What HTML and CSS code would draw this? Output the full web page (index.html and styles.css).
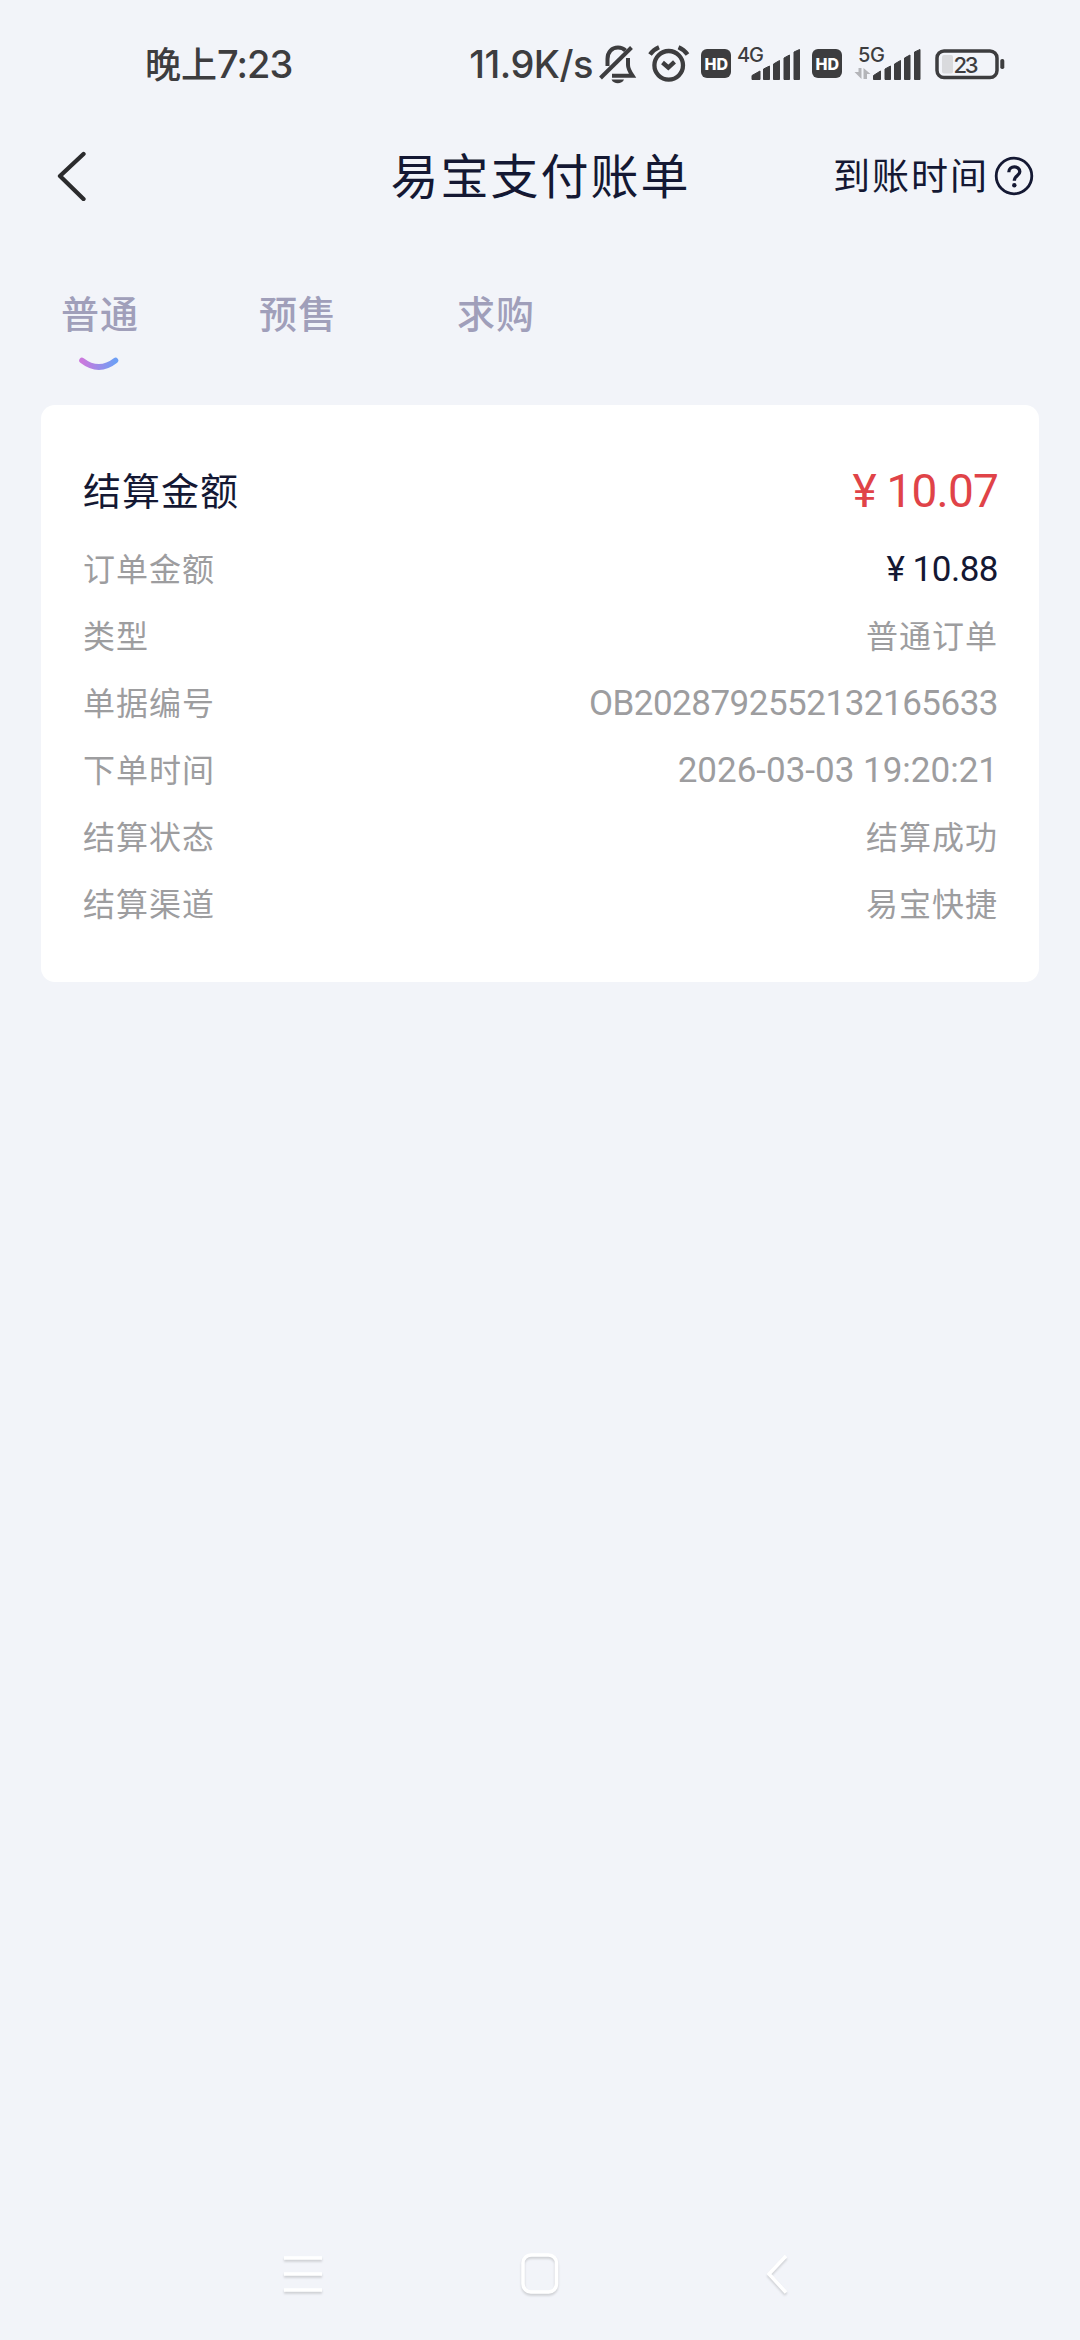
FILE: index.html
```html
<!DOCTYPE html>
<html lang="zh-CN">
<head>
    <meta charset="UTF-8">
    <meta name="viewport" content="width=device-width, initial-scale=1.0">
    <title>易宝支付账单</title>
    <link rel="stylesheet" href="styles.css">
</head>
<body>
    <div class="status-bar">
        <div class="clock"><span class="clock-label">晚上</span>7:23</div>
        <div class="status-icons">
            <span class="speed">11.9K/s</span>
            <svg class="icon-bell" width="40" height="44" viewBox="598 42 40 44" fill="none" stroke="#3d3d3f" stroke-width="4">
                <path d="M607.5 66V59C607.5 52 612 47.500 618 47.500C621 47.500 623.500 48.500 625.500 50.500"/>
                <path d="M600.500 78L631.500 47.500"/>
                <path d="M628 58V65C628 69 630 72 632.500 75.700H612"/>
                <path d="M611.500 79.500H624C622 84.500 613.500 84.500 611.500 79.500Z" fill="#3d3d3f" stroke="none"/>
            </svg>
            <svg class="icon-alarm" width="42" height="40" viewBox="648 44 42 40" fill="none" stroke="#3d3d3f" stroke-width="4.300">
                <circle cx="668.700" cy="65.300" r="14.300"/>
                <path d="M662.500 62.500L668.300 67.500L674.500 61.800"/>
                <path d="M650 54.500Q653.500 49.500 659 47.200M678.500 47.200Q684 49.500 687.500 54.500"/>
            </svg>
            <svg class="icon-hd" width="30" height="30" viewBox="0 0 30 30">
                <rect width="30" height="29" rx="6" fill="#3d3d3f"/>
                <text x="3.500" y="20.500" textLength="23.500" class="hd-text">HD</text>
            </svg>
            <svg class="icon-signal" width="66" height="48" viewBox="736 40 66 48" fill="#3d3d3f">
                <text x="737" y="62" textLength="27" class="net-text">4G</text>
                <path d="M752 75.500L760 71V79.500H752ZM763.500 69L769.500 66V79.500H763.500ZM773.500 64L779.500 60.500V79.500H773.500ZM784 58L789.500 55V79.500H784ZM794 52L799.500 49.500V79.500H794Z" stroke="#3d3d3f" stroke-width="1" stroke-linejoin="round"/>
            </svg>
            <svg class="icon-hd2" width="30" height="30" viewBox="0 0 30 30">
                <rect width="30" height="29" rx="6" fill="#3d3d3f"/>
                <text x="3.500" y="20.500" textLength="23.500" class="hd-text">HD</text>
            </svg>
            <svg class="icon-signal2" width="68" height="48" viewBox="854 40 68 48" fill="#3d3d3f">
                <text x="858" y="62" textLength="27" class="net-text">5G</text>
                <path d="M854.500 72L861.500 79V68H858.500V72ZM863.500 79V68L870.500 74H867V79Z" fill="#b4b5b9"/>
                <path d="M873.500 75.500L880.500 71V79.500H873.500ZM885 69L890.500 66V79.500H885ZM894.500 64L900.500 60.500V79.500H894.500ZM904.500 58L910 55V79.500H904.500ZM914.500 52L920 49.500V79.500H914.500Z" stroke="#3d3d3f" stroke-width="1" stroke-linejoin="round"/>
            </svg>
            <svg class="icon-battery" width="72" height="34" viewBox="934 47 72 34">
                <rect x="937" y="51" width="60" height="26.500" rx="7" fill="none" stroke="#3d3d3f" stroke-width="3.500"/>
                <rect x="942" y="55" width="11" height="18.500" rx="2" fill="#d9dadd"/>
                <rect x="1000.300" y="59" width="4" height="10" rx="1.800" fill="#3d3d3f"/>
                <text x="953.500" y="72.800" textLength="25" class="battery-text">23</text>
            </svg>
        </div>
    </div>

    <div class="header">
        <svg class="back" width="30" height="50" viewBox="56 151 30 50" fill="none" stroke="#2b2b2d" stroke-width="4.300" stroke-linecap="round" stroke-linejoin="round">
            <path d="M83.500 154L60 176L83.500 199"/>
        </svg>
        <h1 class="title">易宝支付账单</h1>
        <div class="arrival">
            <span>到账时间</span>
            <svg width="40" height="40" viewBox="0 0 40 40" fill="none" stroke="#141833">
                <circle cx="20" cy="20" r="17.800" stroke-width="2.800"/>
                <path d="M14.800 16.200C14.800 9.300 25.800 9.300 25.800 15.700C25.800 19.500 20.300 19.500 20.300 24.800" stroke-width="3.300"/>
                <circle cx="20.300" cy="29.300" r="2.200" fill="#141833" stroke="none"/>
            </svg>
        </div>
    </div>

    <div class="tabs">
        <div class="tab active">
            普通
            <svg width="42" height="16" viewBox="0 0 42 16" fill="none">
                <defs>
                    <linearGradient id="smile" x1="0" x2="1" y1="0" y2="0">
                        <stop offset="0" stop-color="#cb78dd"/>
                        <stop offset="1" stop-color="#6d9ff5"/>
                    </linearGradient>
                </defs>
                <path d="M4 4.500Q21 17.500 37.500 4.500" stroke="url(#smile)" stroke-width="5.600" stroke-linecap="round"/>
            </svg>
        </div>
        <div class="tab">预售</div>
        <div class="tab">求购</div>
    </div>

    <div class="card">
        <div class="row total"><span class="label">结算金额</span><span class="price">¥ 10.07</span></div>
        <div class="row"><span class="label">订单金额</span><span class="num dark">¥ 10.88</span></div>
        <div class="row"><span class="label">类型</span><span class="label">普通订单</span></div>
        <div class="row"><span class="label">单据编号</span><span class="num">OB2028792552132165633</span></div>
        <div class="row"><span class="label">下单时间</span><span class="num time">2026-03-03 19:20:21</span></div>
        <div class="row"><span class="label">结算状态</span><span class="label">结算成功</span></div>
        <div class="row"><span class="label">结算渠道</span><span class="label">易宝快捷</span></div>
    </div>

    <div class="nav-bar">
        <svg width="44" height="44" viewBox="281 2257 44 44" stroke="#fff" stroke-width="3.500" fill="none">
            <path d="M284 2263H322M284 2279H322M284 2295H322"/>
        </svg>
        <svg class="home" width="44" height="48" viewBox="518 2255 44 48" stroke="#fff" stroke-width="3.500" fill="none">
            <rect x="523" y="2260" width="33.500" height="37" rx="8"/>
        </svg>
        <svg class="nav-back" width="26" height="44" viewBox="765 2257 26 44" stroke="#fff" stroke-width="3.500" fill="none">
            <path d="M786 2261L769 2279L786 2297.500"/>
        </svg>
    </div>
</body>
</html>
```
FILE: styles.css
```css
* {
    box-sizing: border-box;
}
body {
    margin: 0;
    height: 2340px;
    display: flex;
    flex-direction: column;
    background-color: #f2f4f9;
    color: #141833;
    font-family: "Noto Sans CJK SC", sans-serif;
}
svg {
    display: block;
    flex: none;
}
.status-bar {
    display: flex;
    justify-content: space-between;
    align-items: center;
    height: 128px;
    padding: 0 74px 0 145px;
    color: #3d3d3f;
}
.clock, .speed {
    font-family: Inter, "Noto Sans CJK SC", sans-serif;
    font-size: 38px;
    font-weight: 500;
    line-height: 50px;
    white-space: nowrap;
}
.clock {
    letter-spacing: -1px;
}
.clock-label {
    font-size: 36px;
    letter-spacing: 0;
}
.status-icons {
    display: flex;
    align-items: center;
}
.speed {
    margin-right: 5px;
    letter-spacing: -0.5px;
}
.icon-alarm {
    margin-left: 10px;
}
.icon-hd {
    margin-left: 11px;
}
.icon-signal {
    margin-left: 5px;
}
.icon-hd2 {
    margin-left: 10px;
}
.icon-signal2 {
    margin-left: 12px;
}
.icon-battery {
    margin-left: 12px;
}
.hd-text {
    font: 800 16px Inter, sans-serif;
    fill: #fff;
}
.net-text {
    font: 500 20px Inter, sans-serif;
}
.battery-text {
    font: 500 22px Inter, sans-serif;
    fill: #3d3d3f;
}
.header {
    display: grid;
    grid-template-columns: 1fr auto 1fr;
    align-items: center;
    height: 96px;
    padding: 0 46px 0 56px;
}
.title {
    margin: 0;
    padding: 0 9px 7px 0;
    font-size: 48px;
    font-weight: 400;
    letter-spacing: 2px;
    line-height: 70px;
}
.arrival {
    display: flex;
    align-items: center;
    justify-content: flex-end;
    gap: 5px;
    font-size: 37px;
    letter-spacing: 2px;
}
.arrival span {
    padding-bottom: 4px;
}
.tabs {
    display: flex;
    gap: 120px;
    height: 181px;
    padding: 60px 0 0 61px;
}
.tab {
    width: 78px;
    font-size: 38px;
    font-weight: 500;
    letter-spacing: 1px;
    line-height: 56px;
    color: #a09fba;
}
.tab svg {
    margin: 16px 0 0 17px;
}
.card {
    height: 577px;
    margin: 0 41px;
    padding: 40px 41px 0 42px;
    background-color: #fff;
    border-radius: 14px;
}
.row {
    display: flex;
    justify-content: space-between;
    align-items: center;
    height: 67px;
    font-size: 32px;
    letter-spacing: 1px;
    color: #9d9d9f;
}
.label {
    padding-bottom: 5px;
}
.total {
    height: 91px;
    font-size: 38px;
    color: #141833;
}
.num, .price {
    font-family: Roboto, "Noto Sans CJK SC", sans-serif;
}
.num {
    font-size: 35px;
    letter-spacing: -0.5px;
}
.time {
    letter-spacing: 0;
}
.price {
    font-size: 46px;
    letter-spacing: -0.8px;
    color: #e04348;
}
.dark {
    color: #141833;
}
.nav-bar {
    display: flex;
    align-items: center;
    margin-top: auto;
    height: 127px;
    padding: 0 0 5px 281px;
}
.nav-bar svg {
    filter: drop-shadow(0 2px 1px rgba(0, 0, 0, 0.15));
}
.home {
    margin-left: 193px;
}
.nav-back {
    margin-left: 203px;
}
```
